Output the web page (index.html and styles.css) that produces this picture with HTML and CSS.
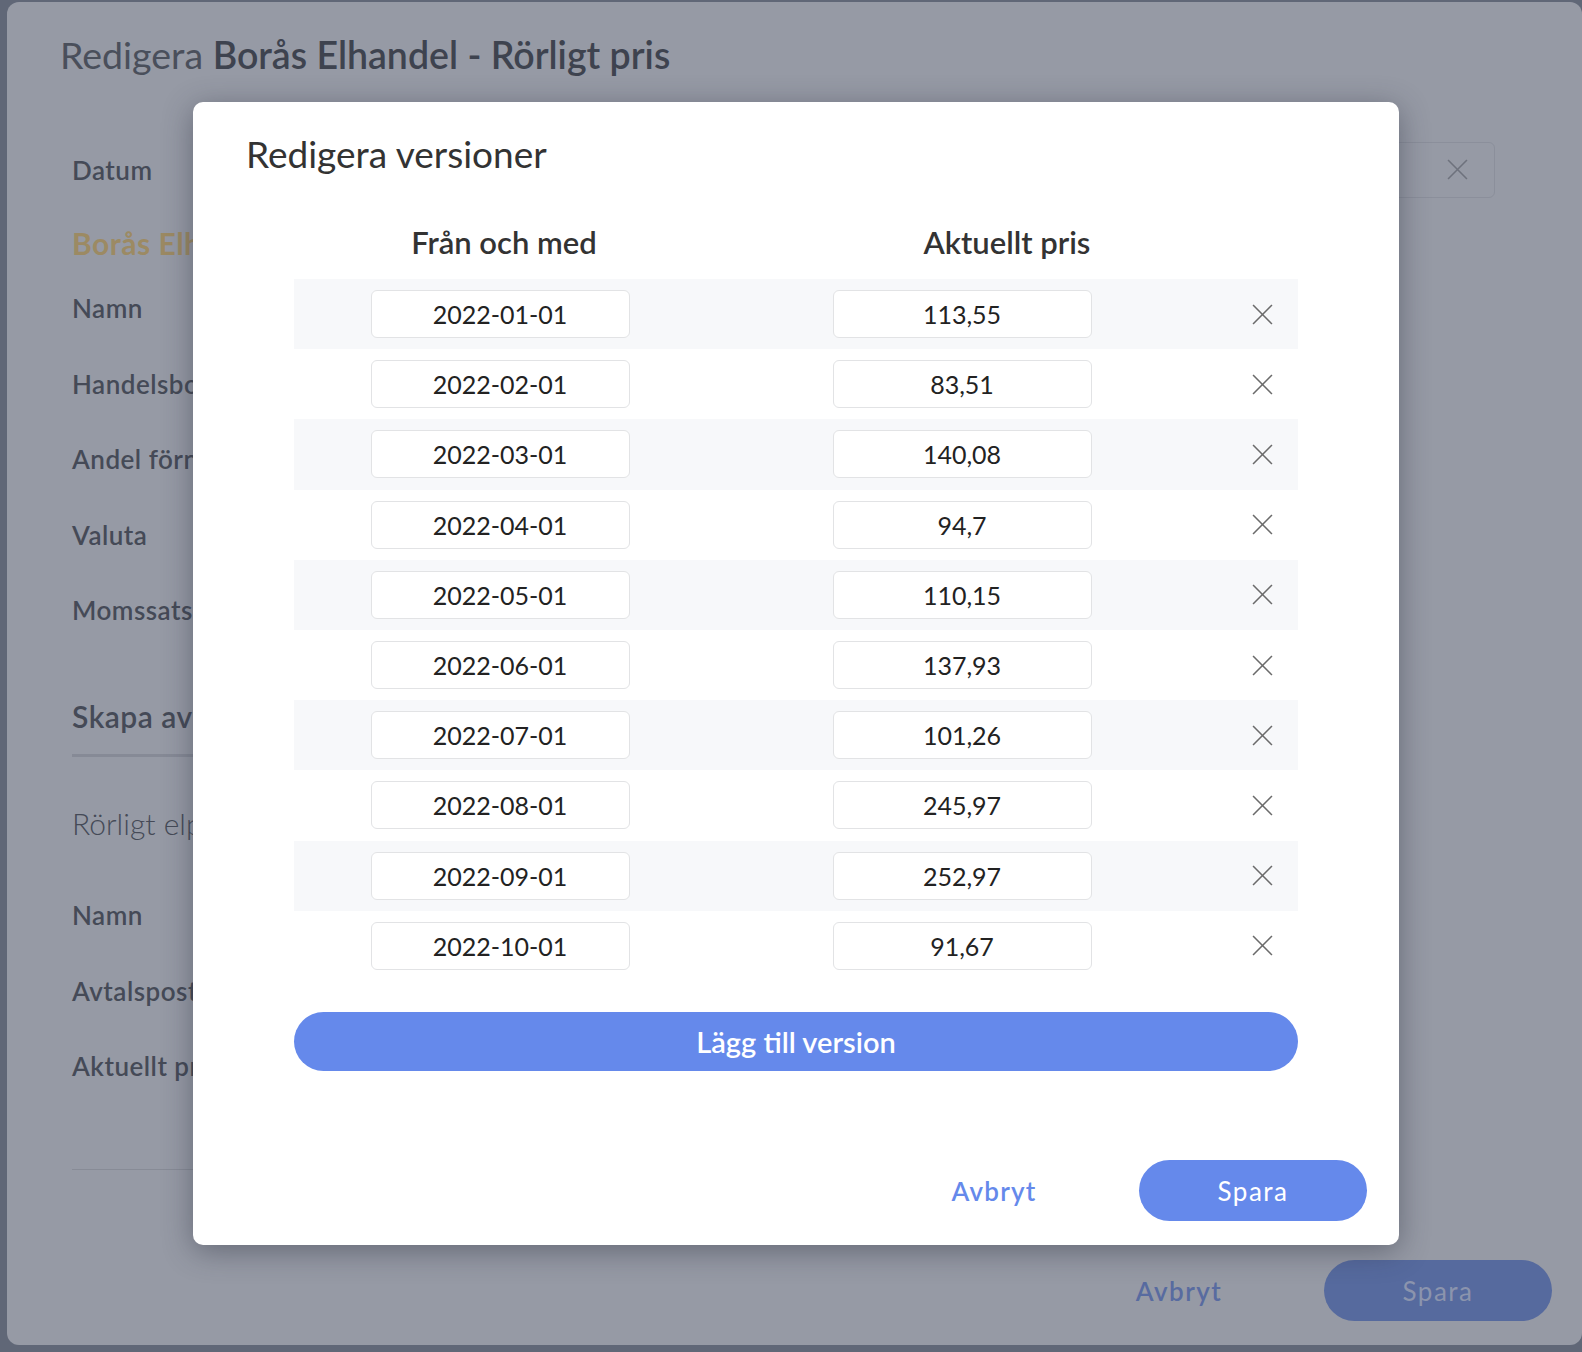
FILE: index.html
```html
<!doctype html>
<html lang="sv">
<head>
    <meta charset="utf-8">
    <title>Redigera versioner</title>
    <link rel="stylesheet" href="styles.css">
</head>
<body>
    <div class="page">
        <h1 class="page-title">Redigera <b>Borås Elhandel - Rörligt pris</b></h1>

        <div class="form">
            <div class="field field-date">
                <span class="label">Datum</span>
                <div class="date-box">
                    <svg class="x-icon" viewBox="0 0 20 20"><path d="M1 1 L19 19 M19 1 L1 19"/></svg>
                </div>
            </div>

            <div class="supplier">Borås Elhandel</div>
            <div class="field"><span class="label">Namn</span></div>
            <div class="field"><span class="label">Handelsbolag</span></div>
            <div class="field"><span class="label">Andel förnybart</span></div>
            <div class="field"><span class="label">Valuta</span></div>
            <div class="field"><span class="label">Momssats</span></div>

            <div class="tabs">
                <div class="section-title">Skapa avtal</div>
            </div>
            <div class="subtitle">Rörligt elpris</div>
            <div class="field"><span class="label">Namn</span></div>
            <div class="field"><span class="label">Avtalspost</span></div>
            <div class="field"><span class="label">Aktuellt pris</span></div>

            <div class="divider"></div>

            <div class="form-actions">
                <button class="link-btn">Avbryt</button>
                <button class="primary-btn">Spara</button>
            </div>
        </div>
    </div>

    <div class="modal">
        <h2 class="modal-title">Redigera versioner</h2>

        <div class="versions">
            <div class="versions-head">
                <span>Från och med</span>
                <span>Aktuellt pris</span>
            </div>

            <div id="version-rows"></div>

            <button class="add-btn">Lägg till version</button>
        </div>

        <div class="modal-actions">
            <button class="cancel">Avbryt</button>
            <button class="save">Spara</button>
        </div>
    </div>

    <script>
        var versions = [
            ["2022-01-01", "113,55"],
            ["2022-02-01", "83,51"],
            ["2022-03-01", "140,08"],
            ["2022-04-01", "94,7"],
            ["2022-05-01", "110,15"],
            ["2022-06-01", "137,93"],
            ["2022-07-01", "101,26"],
            ["2022-08-01", "245,97"],
            ["2022-09-01", "252,97"],
            ["2022-10-01", "91,67"]
        ];

        var list = document.getElementById("version-rows");

        versions.forEach(function (v) {
            var row = document.createElement("div");
            row.className = "version-row";
            row.innerHTML =
                '<div class="cell"><input class="cell-input" value="' + v[0] + '"></div>' +
                '<div class="cell"><input class="cell-input" value="' + v[1] + '"></div>' +
                '<div class="cell cell-remove"><svg class="x-icon" viewBox="0 0 20 20"><path d="M1 1 L19 19 M19 1 L1 19"/></svg></div>';
            list.appendChild(row);
        });
    </script>
</body>
</html>
```

FILE: styles.css
```css
/* General styles */
body {
    font-family: Lato, "Open Sans", sans-serif;
    margin: 0;
    padding: 0;
    background-color: #606777;
    color: #333;
    width: 1582px;
    height: 1352px;
    overflow: hidden;
}

button {
    font-family: inherit;
    border: none;
    cursor: pointer;
}

/* backdrop page, dimmed behind the dialog */
.page {
    margin: 2px 0 0 7px;
    height: 1343px;
    background-color: #969aa5;
    border-radius: 12px;
    overflow: hidden;
    color: #454a57;
}

.page-title {
    margin: 0;
    padding: 31px 0 0 53px;
    font-size: 37.5px;
    line-height: 44px;
    font-weight: 400;
    color: #4a4f5b;
}

.page-title b {
    font-weight: 600;
    color: #3e434f;
}

.form {
    margin: 0 87px 0 65px;
    padding-top: 64.5px;
}

.field {
    height: 75.5px;
    display: flex;
    align-items: center;
}

.label {
    font-size: 26px;
    font-weight: 600;
    letter-spacing: 0.5px;
}

.field-date {
    height: 56px;
    justify-content: space-between;
}

.date-box {
    width: 300px;
    height: 56px;
    border: 1px solid #8b8f9b;
    border-radius: 6px;
    display: flex;
    align-items: center;
    justify-content: flex-end;
    padding-right: 26px;
    box-sizing: border-box;
}

.date-box .x-icon {
    stroke: #6e727d;
}

.supplier {
    margin-top: 17px;
    height: 56px;
    line-height: 56px;
    font-size: 30px;
    font-weight: 700;
    color: #9c8a63;
    letter-spacing: 0.5px;
}

.tabs {
    margin-top: 47.5px;
    display: flex;
}

.section-title {
    padding-bottom: 18px;
    border-bottom: 3px solid #868a96;
    font-size: 30px;
    font-weight: 600;
    line-height: 40px;
    letter-spacing: 0.5px;
    min-width: 250px;
}

.subtitle {
    margin-top: 46px;
    height: 40px;
    line-height: 40px;
    font-size: 30px;
    font-weight: 300;
    margin-bottom: 35px;
}

.divider {
    margin-top: 65px;
    width: 1100px;
    border-top: 1px solid #878b96;
}

.form-actions {
    padding-top: 90px;
    display: flex;
    justify-content: flex-end;
    gap: 31px;
    margin-right: -57px;
}

.link-btn {
    width: 228px;
    height: 61px;
    background: none;
    font-size: 26px;
    font-weight: 600;
    letter-spacing: 1.5px;
    color: #586ba0;
}

.primary-btn {
    width: 228px;
    height: 61px;
    border-radius: 31px;
    background-color: #566a9e;
    font-size: 26px;
    letter-spacing: 1.5px;
    color: #8b94ad;
}

/* dialog */
.modal {
    position: absolute;
    left: 193px;
    top: 102px;
    width: 1206px;
    height: 1143px;
    box-sizing: border-box;
    padding: 29px 32px 24px 53px;
    background-color: #fff;
    border-radius: 10px;
    box-shadow: 0 6px 30px rgba(40, 44, 60, 0.45);
    display: flex;
    flex-direction: column;
}

.modal-title {
    margin: 0;
    font-size: 37px;
    line-height: 46px;
    font-weight: 400;
    color: #333;
}

.versions {
    margin: 45px 0 0 48px;
    width: 1004px;
}

.versions-head {
    display: grid;
    grid-template-columns: 420px 586px;
    height: 40px;
    align-items: center;
    justify-items: center;
    font-size: 31px;
    font-weight: 600;
    color: #333;
}

#version-rows {
    margin-top: 17px;
}

.version-row {
    display: grid;
    grid-template-columns: 412px 512px 80px;
    height: 70.2px;
}

.version-row:nth-child(odd) {
    background-color: #f7f8fa;
}

.cell {
    display: flex;
    align-items: center;
    justify-content: center;
}

.cell-remove {
    padding-left: 8px;
}

.cell-input {
    width: 259px;
    height: 48px;
    box-sizing: border-box;
    border: 1px solid #e2e3e5;
    border-radius: 6px;
    background-color: #fff;
    text-align: center;
    font-family: inherit;
    font-size: 25px;
    color: #222;
}

.x-icon {
    width: 21px;
    height: 21px;
    fill: none;
    stroke: #6b6b6b;
    stroke-width: 1.5;
}

.add-btn {
    margin-top: 31px;
    width: 100%;
    height: 59px;
    border-radius: 30px;
    background-color: #6589eb;
    color: #fff;
    font-size: 29px;
    font-weight: 600;
}

.modal-actions {
    margin-top: auto;
    display: flex;
    justify-content: flex-end;
    gap: 31px;
}

.cancel {
    width: 228px;
    height: 61px;
    background: none;
    color: #6589eb;
    font-size: 26px;
    font-weight: 600;
    letter-spacing: 1.2px;
}

.save {
    width: 228px;
    height: 61px;
    border-radius: 31px;
    background-color: #6589eb;
    color: #fff;
    font-size: 26px;
    letter-spacing: 1.5px;
}
```
